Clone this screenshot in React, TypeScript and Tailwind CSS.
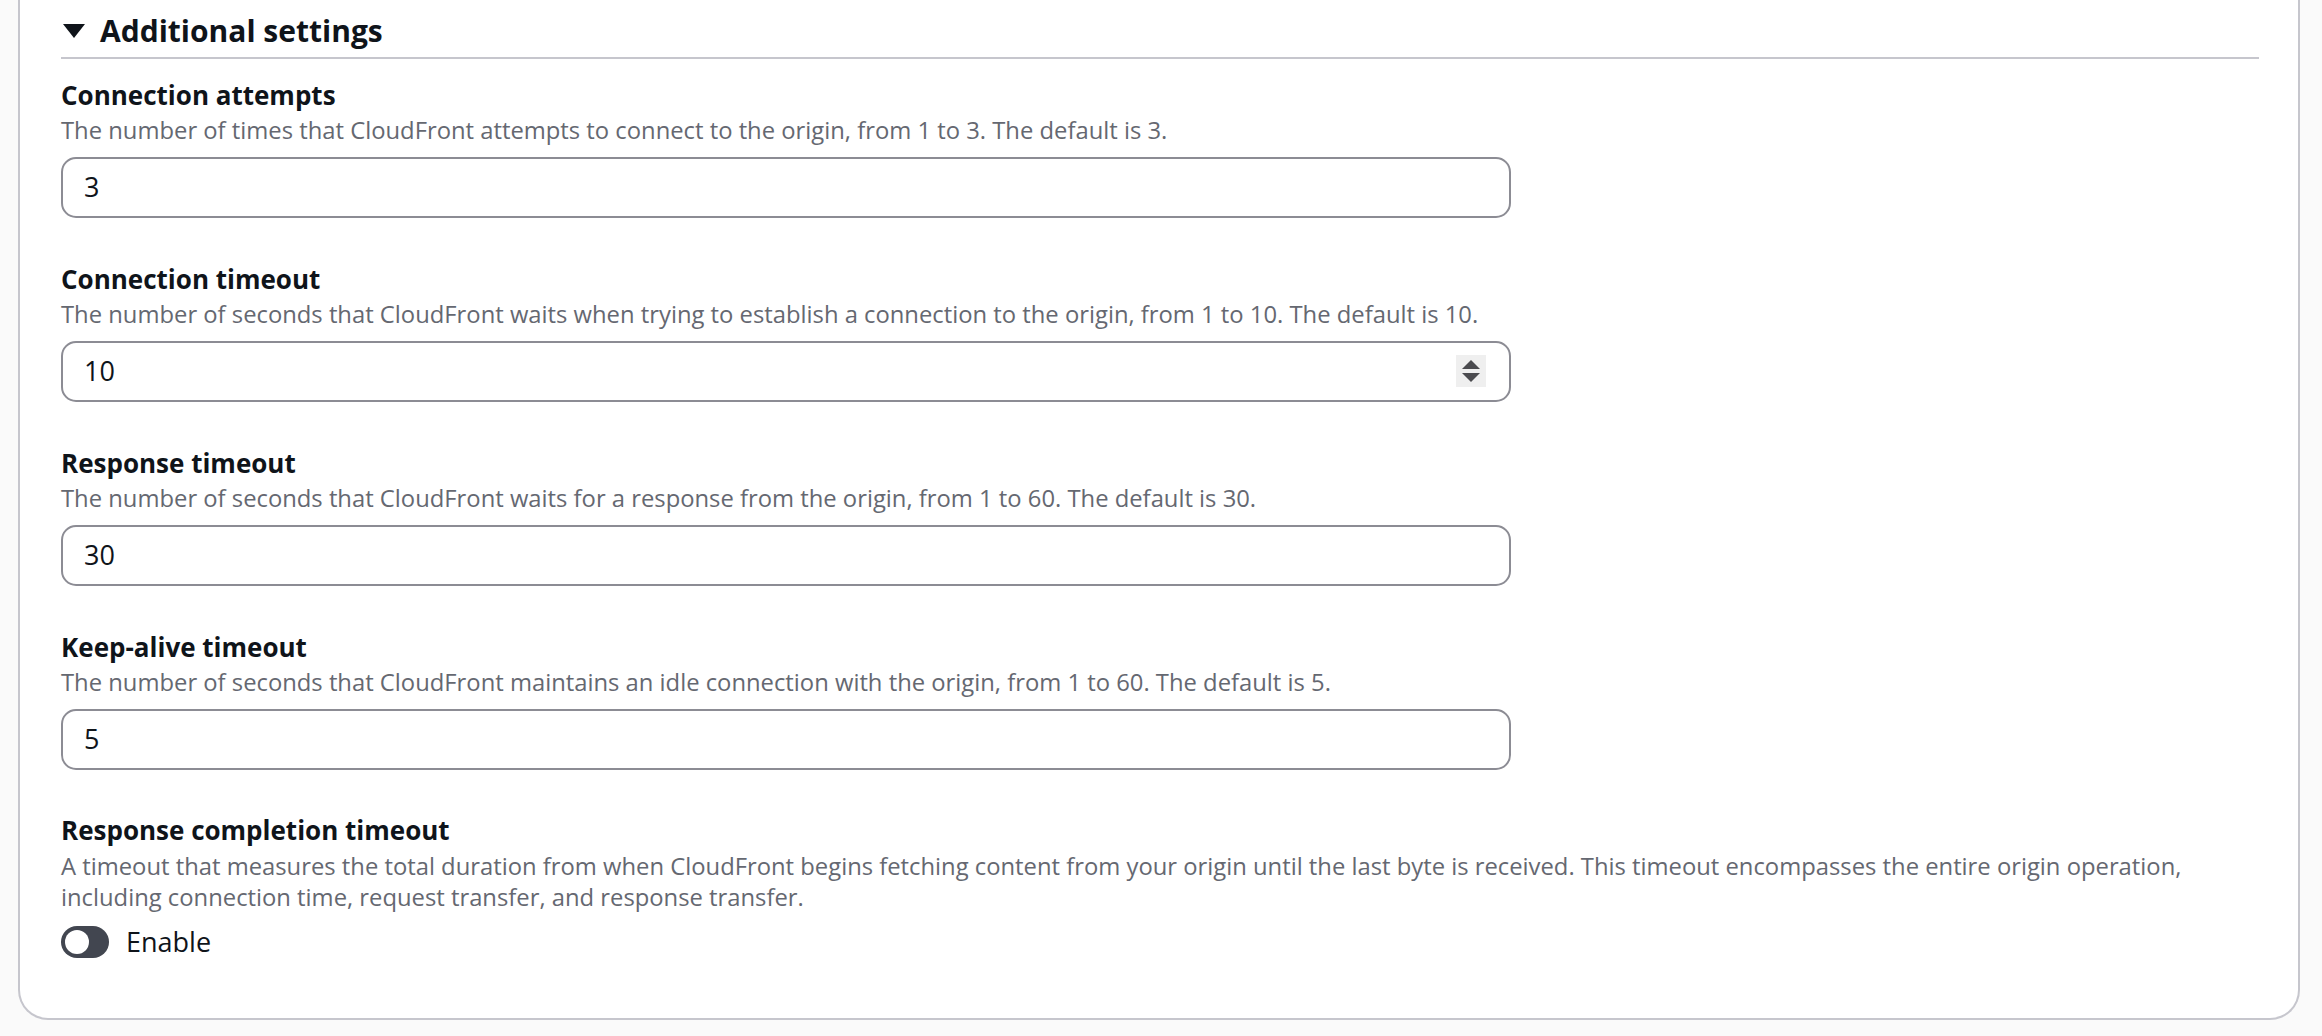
import React from "react";

const fields = [
  {
    label: "Connection attempts",
    desc: "The number of times that CloudFront attempts to connect to the origin, from 1 to 3. The default is 3.",
    value: "3",
    spinner: false,
  },
  {
    label: "Connection timeout",
    desc: "The number of seconds that CloudFront waits when trying to establish a connection to the origin, from 1 to 10. The default is 10.",
    value: "10",
    spinner: true,
  },
  {
    label: "Response timeout",
    desc: "The number of seconds that CloudFront waits for a response from the origin, from 1 to 60. The default is 30.",
    value: "30",
    spinner: false,
  },
  {
    label: "Keep-alive timeout",
    desc: "The number of seconds that CloudFront maintains an idle connection with the origin, from 1 to 60. The default is 5.",
    value: "5",
    spinner: false,
  },
];

function Field({ label, desc, value, spinner }: { label: string; desc: string; value: string; spinner: boolean }) {
  return (
    <div className="flex flex-col mb-[45px]">
      <div className="text-[26px] leading-[32px] font-bold text-[#0f141a]">{label}</div>
      <div className="mt-[4px] text-[23.8px] leading-[30px] text-[#656871]">{desc}</div>
      <div className="relative mt-[12px] w-[1450px] h-[61px] border-2 border-[#8c8c94] rounded-[15px] flex items-center pl-[21px] bg-white">
        <span className="text-[27px] text-[#0f141a]">{value}</span>
        {spinner && (
          <div className="absolute right-[23px] top-[12px] w-[30px] h-[32px] bg-[#efefef] flex flex-col items-center justify-center gap-[4px]">
            <svg width="18" height="9" viewBox="0 0 18 9">
              <polygon points="9,0 18,9 0,9" fill="#4b4b4f" />
            </svg>
            <svg width="18" height="9" viewBox="0 0 18 9">
              <polygon points="0,0 18,0 9,9" fill="#4b4b4f" />
            </svg>
          </div>
        )}
      </div>
    </div>
  );
}

export default function App() {
  return (
    <div
      className="w-[2322px] h-[1036px] bg-[#fafafa] overflow-hidden"
      style={{ fontFamily: '"Open Sans", "Noto Sans", Arial, sans-serif' }}
    >
      <div className="ml-[18px] mr-[22px] h-[1020px] bg-white border-2 border-t-0 border-[#c6c6cd] rounded-b-[30px] pl-[41px] pr-[39px] pt-[11px]">
        <div className="flex items-center h-[40px]">
          <svg width="22" height="14" viewBox="0 0 22 14" className="ml-[2px]">
            <polygon points="0,0 22,0 11,14" fill="#0f141a" />
          </svg>
          <span className="ml-[15px] text-[30px] leading-[40px] font-bold text-[#0f141a]">Additional settings</span>
        </div>
        <div className="mt-[6px] h-[2px] bg-[#c6c6cd]" />
        <div className="mt-[20px] flex flex-col">
          {fields.map((f) => (
            <Field key={f.label} {...f} />
          ))}
          <div className="flex flex-col -mt-[1px]">
            <div className="text-[26px] leading-[32px] font-bold text-[#0f141a]">Response completion timeout</div>
            <div className="mt-[5px] text-[23.8px] leading-[31px] text-[#656871] whitespace-nowrap">
              A timeout that measures the total duration from when CloudFront begins fetching content from your origin until the last byte is received. This timeout encompasses the entire origin operation,
              <br />
              including connection time, request transfer, and response transfer.
            </div>
            <div className="mt-[11px] flex items-center h-[36px]">
              <div className="w-[48px] h-[32px] rounded-full bg-[#424650] flex items-center pl-[4px]">
                <div className="w-[24px] h-[24px] rounded-full bg-white" />
              </div>
              <span className="ml-[17px] text-[27px] text-[#0f141a]">Enable</span>
            </div>
          </div>
        </div>
      </div>
    </div>
  );
}
